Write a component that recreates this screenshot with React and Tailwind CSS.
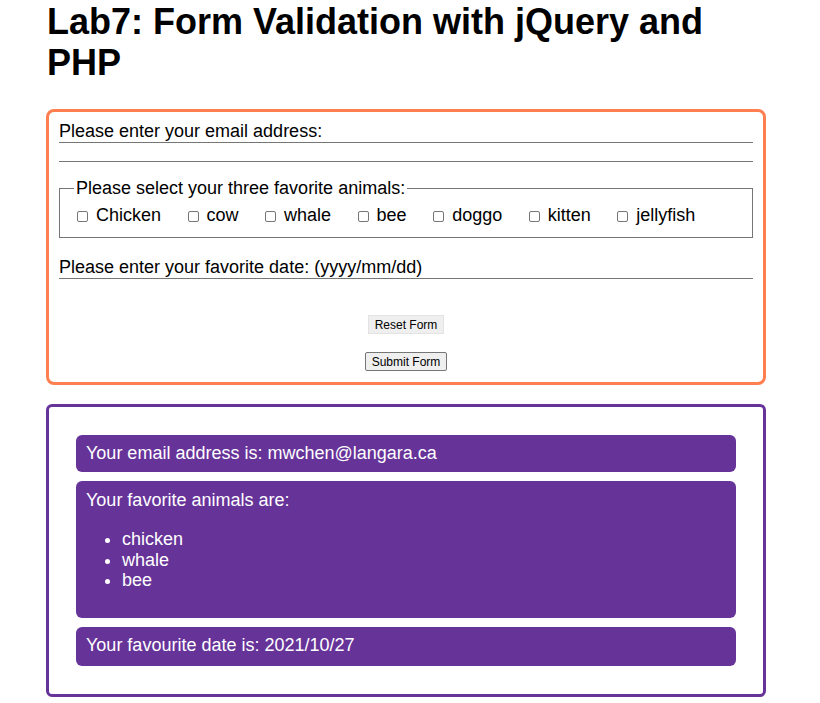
import React from "react";

const animals = ["Chicken", "cow", "whale", "bee", "doggo", "kitten", "jellyfish"];
const picked = ["chicken", "whale", "bee"];

function App() {
  return (
    <div className="min-h-screen bg-white font-['Liberation_Sans',Arial,sans-serif] text-black">
      <div className="ml-[46px] w-[720px]">
        <h1 className="text-[36px] leading-[41px] font-bold pl-[1px] pt-[1px]">
          Lab7: Form Validation with jQuery and PHP
        </h1>

        {/* form */}
        <form className="mt-[26px] border-[3px] border-[#ff7f50] rounded-[8px] pt-[9px] pb-[11px] px-[10px] text-[18px] leading-[21px]">
          <label className="block border-b border-[#767676]">Please enter your email address:</label>
          <input
            type="text"
            className="block w-full h-[19px] border-b border-[#767676] outline-none"
          />

          <fieldset className="mt-[16px] border border-[#767676] pl-[14px] pt-[6px] pb-[11px]">
            <legend className="px-[2px]">Please select your three favorite animals:</legend>
            <div className="flex items-center gap-[26.5px] pl-[3px]">
              {animals.map((a) => (
                <label key={a} className="flex items-center">
                  <input
                    type="checkbox"
                    className="appearance-none w-[11px] h-[11px] mt-[2px] border border-[#767676] rounded-[2px] bg-white"
                  />
                  <span className="ml-[8px]">{a}</span>
                </label>
              ))}
            </div>
          </fieldset>

          <label className="block mt-[19px] border-b border-[#767676]">
            Please enter your favorite date: (yyyy/mm/dd)
          </label>

          <div className="flex flex-col items-center">
            <button
              type="reset"
              className="mt-[36px] h-[19px] px-[6px] text-[12px] leading-[14px] bg-[#efefef] border border-[#e3e3e3]"
            >
              Reset Form
            </button>
            <button
              type="button"
              className="mt-[18px] h-[19px] px-[6px] text-[12px] leading-[14px] bg-[#efefef] border border-[#767676] rounded-[2px]"
            >
              Submit Form
            </button>
          </div>
        </form>

        {/* results */}
        <div className="mt-[19px] border-[3px] border-[#663399] rounded-[6px] pt-[28px] pb-[28px] px-[27px] text-[18px] leading-[21px] text-white">
          <div className="flex flex-col gap-[9px]">
            <div className="bg-[#663399] rounded-[6px] px-[10px] pt-[8px] pb-[8px]">
              Your email address is: mwchen@langara.ca
            </div>
            <div className="bg-[#663399] rounded-[6px] px-[10px] pt-[9px] pb-[9px]">
              <p>Your favorite animals are:</p>
              <ul className="list-disc pl-[36px] my-[18px] leading-[20.5px]">
                {picked.map((p) => (
                  <li key={p}>{p}</li>
                ))}
              </ul>
            </div>
            <div className="bg-[#663399] rounded-[6px] px-[10px] pt-[8px] pb-[10px]">
              Your favourite date is: 2021/10/27
            </div>
          </div>
        </div>
      </div>
    </div>
  );
}

export default App;
